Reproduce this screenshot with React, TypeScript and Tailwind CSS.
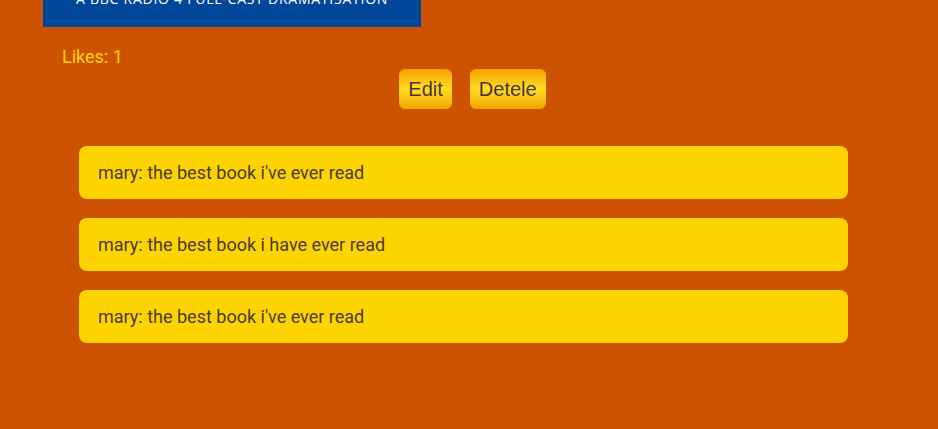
const comments = [
  "mary: the best book i've ever read",
  "mary: the best book i have ever read",
  "mary: the best book i've ever read",
];

export default function App() {
  return (
    <div className="min-h-[429px] w-full bg-[#cd5300] font-['Roboto',sans-serif]">
      {/* cover image, scrolled mostly out of view */}
      <div className="ml-[43px] h-[27px] w-[378px] overflow-hidden bg-[#00479a]">
        <p className="-mt-[8px] pl-[33px] font-['Open_Sans',sans-serif] text-[14px] leading-[14px] tracking-[0.75px] text-white whitespace-nowrap">
          A BBC RADIO 4 FULL-CAST DRAMATISATION
        </p>
      </div>

      <p className="mt-[19px] pl-[62px] text-[18px] leading-[21px] text-[#ffd200]">Likes: 1</p>

      <div className="mt-[2px] flex justify-center gap-[18px] pl-[7px]">
        <button className="h-[40px] rounded-[6px] bg-gradient-to-b from-[#f5a000] via-[#ffdc20] to-[#f2a400] px-[9px] font-['Liberation_Sans',sans-serif] text-[20px] text-[#4a3636]">
          Edit
        </button>
        <button className="h-[40px] rounded-[6px] bg-gradient-to-b from-[#f5a000] via-[#ffdc20] to-[#f2a400] px-[9px] font-['Liberation_Sans',sans-serif] text-[20px] text-[#4a3636]">
          Detele
        </button>
      </div>

      <ul className="mt-[37px] flex flex-col gap-[19px] pl-[79px] pr-[90px]">
        {comments.map((c, i) => (
          <li
            key={i}
            className="flex h-[53px] items-center rounded-[8px] bg-[#fdd300] px-[19px] text-[18px] text-[#4b3b2c]"
          >
            {c}
          </li>
        ))}
      </ul>
    </div>
  );
}
